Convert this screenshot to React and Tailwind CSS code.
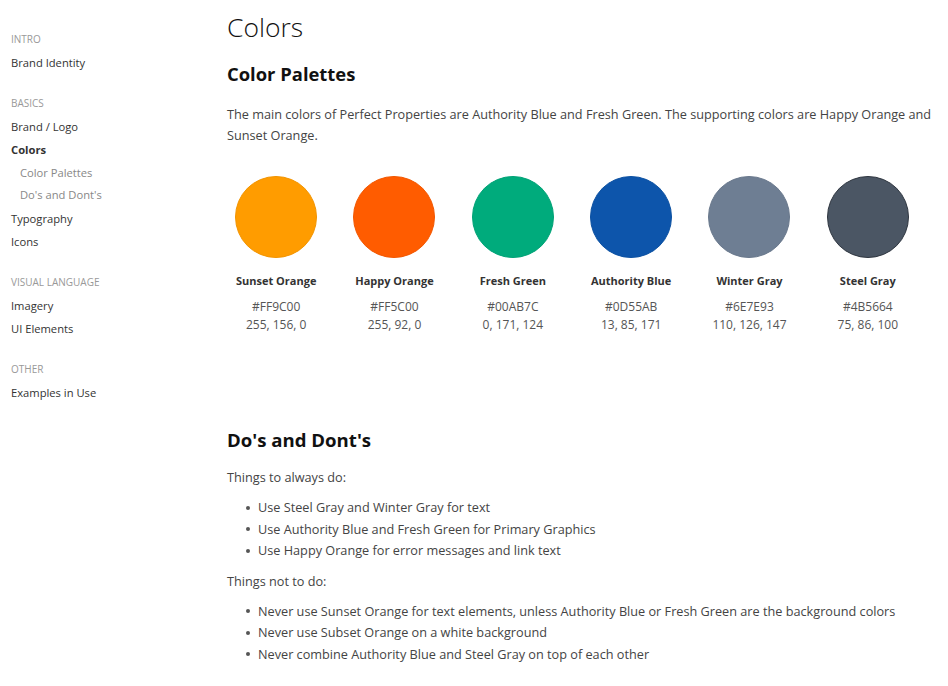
import React from 'react';

const nav = [
  { title: 'Intro', items: [{ label: 'Brand Identity' }] },
  {
    title: 'Basics',
    items: [
      { label: 'Brand / Logo' },
      { label: 'Colors', active: true },
      { label: 'Color Palettes', sub: true },
      { label: "Do's and Dont's", sub: true },
      { label: 'Typography' },
      { label: 'Icons' },
    ],
  },
  { title: 'Visual Language', items: [{ label: 'Imagery' }, { label: 'UI Elements' }] },
  { title: 'Other', items: [{ label: 'Examples in Use' }] },
];

const colors = [
  { name: 'Sunset Orange', hex: '#FF9C00', rgb: '255, 156, 0', bg: 'bg-[#ff9c00]', border: 'border-[#f29400]' },
  { name: 'Happy Orange', hex: '#FF5C00', rgb: '255, 92, 0', bg: 'bg-[#ff5c00]', border: 'border-[#f25700]' },
  { name: 'Fresh Green', hex: '#00AB7C', rgb: '0, 171, 124', bg: 'bg-[#00ab7c]', border: 'border-[#00a276]' },
  { name: 'Authority Blue', hex: '#0D55AB', rgb: '13, 85, 171', bg: 'bg-[#0d55ab]', border: 'border-[#0c51a2]' },
  { name: 'Winter Gray', hex: '#6E7E93', rgb: '110, 126, 147', bg: 'bg-[#6e7e93]', border: 'border-[#69788c]' },
  { name: 'Steel Gray', hex: '#4B5664', rgb: '75, 86, 100', bg: 'bg-[#4b5664]', border: 'border-[#2f3640]' },
];

const dos = [
  'Use Steel Gray and Winter Gray for text',
  'Use Authority Blue and Fresh Green for Primary Graphics',
  'Use Happy Orange for error messages and link text',
];

const donts = [
  'Never use Sunset Orange for text elements, unless Authority Blue or Fresh Green are the background colors',
  'Never use Subset Orange on a white background',
  'Never combine Authority Blue and Steel Gray on top of each other',
];

const Sidebar = () => (
  <aside className="w-[216px] shrink-0 pl-[11px] pt-[31px]">
    {nav.map((section) => (
      <div key={section.title} className="mb-[21px]">
        <div className="h-[16px] text-[10px] leading-[16px] uppercase text-[#999] mb-[4px]">{section.title}</div>
        {section.items.map((item) => (
          <div
            key={item.label}
            className={`text-[11.2px] ${
              item.sub ? 'pl-[9px] text-[#888] h-[22.5px] leading-[22.5px]' : 'h-[23.2px] leading-[23.2px] text-[#333]'
            } ${item.active ? 'font-bold text-[#222]' : ''}`}
          >
            {item.label}
          </div>
        ))}
      </div>
    ))}
  </aside>
);

const Swatch = ({ color }) => (
  <div className="flex flex-col items-center">
    <div className={`w-[82px] h-[82px] rounded-full border ${color.bg} ${color.border}`} />
    <div className="mt-[14px] text-[11px] leading-[18px] font-bold text-[#333]">{color.name}</div>
    <div className="mt-[8px] text-[12px] leading-[18px] text-[#555]">{color.hex}</div>
    <div className="text-[12px] leading-[18px] text-[#555]">{color.rgb}</div>
  </div>
);

const Bullets = ({ items }) => (
  <ul className="pl-[19px] mb-[9px]">
    {items.map((t) => (
      <li key={t} className="flex items-center text-[12.7px] leading-[21.5px] text-[#444]">
        <span className="w-[4px] h-[4px] rounded-full bg-[#555] mr-[8px] shrink-0" />
        {t}
      </li>
    ))}
  </ul>
);

export default function App() {
  return (
    <div className="flex min-h-[686px] bg-white font-['Open_Sans',sans-serif]">
      <Sidebar />
      <main className="flex-1 pl-[11px] pr-[8px]">
        <h1 className="mt-[8px] text-[26.5px] leading-[38px] font-light text-[#111]">Colors</h1>
        <h2 className="mt-[15px] text-[18.4px] leading-[26px] font-bold text-[#111]">Color Palettes</h2>
        <p className="mt-[17px] text-[12.7px] leading-[21px] text-[#444]">
          The main colors of Perfect Properties are Authority Blue and Fresh Green. The supporting colors are Happy Orange and Sunset Orange.
        </p>
        <div className="mt-[30px] -ml-[10px] w-[710px] grid grid-cols-6">
          {colors.map((c) => (
            <Swatch key={c.name} color={c} />
          ))}
        </div>
        <h2 className="mt-[93px] text-[18.6px] leading-[26px] font-bold text-[#111]">Do's and Dont's</h2>
        <p className="mt-[14px] mb-[9px] text-[12.7px] leading-[21px] text-[#444]">Things to always do:</p>
        <Bullets items={dos} />
        <p className="mb-[9px] text-[12.7px] leading-[21px] text-[#444]">Things not to do:</p>
        <Bullets items={donts} />
      </main>
    </div>
  );
}
